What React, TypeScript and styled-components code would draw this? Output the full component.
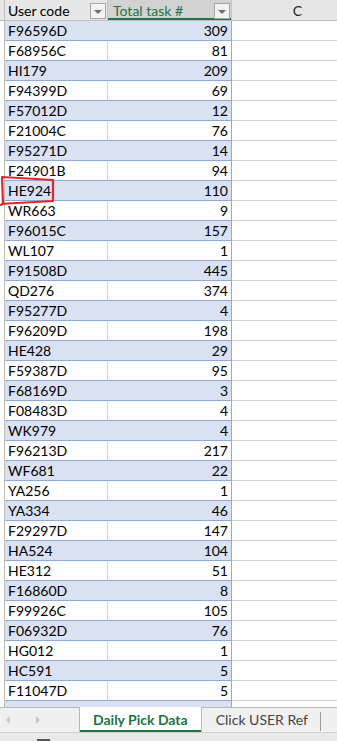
import React from 'react';
import styled, { createGlobalStyle } from 'styled-components';

const rows: [string, number][] = [
  ['F96596D', 309], ['F68956C', 81], ['HI179', 209], ['F94399D', 69],
  ['F57012D', 12], ['F21004C', 76], ['F95271D', 14], ['F24901B', 94],
  ['HE924', 110], ['WR663', 9], ['F96015C', 157], ['WL107', 1],
  ['F91508D', 445], ['QD276', 374], ['F95277D', 4], ['F96209D', 198],
  ['HE428', 29], ['F59387D', 95], ['F68169D', 3], ['F08483D', 4],
  ['WK979', 4], ['F96213D', 217], ['WF681', 22], ['YA256', 1],
  ['YA334', 46], ['F29297D', 147], ['HA524', 104], ['HE312', 51],
  ['F16860D', 8], ['F99926C', 105], ['F06932D', 76], ['HG012', 1],
  ['HC591', 5], ['F11047D', 5],
];

function App() {
  return (
    <Sheet>
      <GlobalStyle />
      <Grid>
        <HeaderRow>
          <Stub $header />
          <HeadCell>
            User code
            <FilterButton><Caret /></FilterButton>
          </HeadCell>
          <HeadCell $selected>
            Total task #
            <FilterButton><Caret /></FilterButton>
          </HeadCell>
          <ColLetter>C</ColLetter>
        </HeaderRow>
        {rows.map(([code, total], i) => (
          <Row key={code}>
            <Stub />
            <CodeCell $band={i % 2 === 0}>{code}</CodeCell>
            <NumCell $band={i % 2 === 0}>{total}</NumCell>
            <EmptyCell />
          </Row>
        ))}
        <Row>
          <Stub />
          <CodeCell $band />
          <NumCell $band />
          <EmptyCell />
        </Row>
        {/* hand-drawn red mark round HE924 */}
        <Annotation width="60" height="34" viewBox="0 0 60 34">
          <path
            d="M2 2 L53 5 L53 26 L8 28.5 L3 29 L2 2 M3 28 L1 30"
            fill="none"
            stroke="#e3262c"
            strokeWidth="2.2"
            strokeLinejoin="round"
            strokeLinecap="round"
          />
        </Annotation>
      </Grid>
      <TabBar>
        <Arrows>
          <Arrow $dir="left" />
          <Arrow $dir="right" />
        </Arrows>
        <Tab $active>Daily Pick Data</Tab>
        <Tab>Click USER Ref</Tab>
      </TabBar>
      <StatusStrip>
        <StatusMark />
      </StatusStrip>
    </Sheet>
  );
}

const GlobalStyle = createGlobalStyle`
  html, body {
    margin: 0;
    padding: 0;
    background: #fff;
    overflow: hidden;
  }
  body {
    font-family: Lato, "Liberation Sans", sans-serif;
    font-size: 14px;
    color: #000;
  }
`;

const Sheet = styled.div`
  width: 337px;
  height: 741px;
  display: flex;
  flex-direction: column;
  overflow: hidden;
`;

const Grid = styled.div`
  position: relative;
  height: 707px;
  overflow: hidden;
  flex-shrink: 0;
`;

const columns = '5px 103px 124px 132px';

const HeaderRow = styled.div`
  display: grid;
  grid-template-columns: ${columns};
  height: 21px;
  background: #e6e6e6;
  border-bottom: 1px solid #bfbfbf;
  box-sizing: border-box;
`;

const Row = styled.div`
  display: grid;
  grid-template-columns: ${columns};
  height: 20px;
`;

const Stub = styled.div<{ $header?: boolean }>`
  background: ${p => (p.$header ? '#e6e6e6' : '#fff')};
  border-right: 1px solid #bdbdbd;
`;

const HeadCell = styled.div<{ $selected?: boolean }>`
  position: relative;
  display: flex;
  align-items: center;
  padding-left: ${p => (p.$selected ? '5px' : '3px')};
  border-right: 1px solid #c4c4c4;
  background: ${p => (p.$selected ? '#d2d2d2' : '#e6e6e6')};
  color: ${p => (p.$selected ? '#217346' : '#000')};
  box-shadow: ${p => (p.$selected ? 'inset 0 -2px 0 #217346' : 'none')};
  white-space: nowrap;
`;

const FilterButton = styled.div`
  position: absolute;
  right: 1px;
  top: 3px;
  width: 14px;
  height: 14px;
  border: 1px solid #a6a6a6;
  background: #f3f3f3;
  display: flex;
  align-items: center;
  justify-content: center;
`;

const Caret = styled.div`
  width: 0;
  height: 0;
  border-left: 4px solid transparent;
  border-right: 4px solid transparent;
  border-top: 4px solid #6f6f6f;
  margin-top: 1px;
`;

const ColLetter = styled.div`
  display: flex;
  align-items: center;
  justify-content: center;
  color: #222;
  border-right: 1px solid #c4c4c4;
`;

const CodeCell = styled.div<{ $band?: boolean }>`
  display: flex;
  align-items: center;
  padding-left: 3px;
  background: ${p => (p.$band ? '#d9e1f2' : '#fff')};
  border-right: 1px solid ${p => (p.$band ? '#d9e1f2' : '#d4d4d4')};
  border-bottom: 1px solid #8eaadb;
  box-sizing: border-box;
  white-space: nowrap;
`;

const NumCell = styled.div<{ $band?: boolean }>`
  display: flex;
  align-items: center;
  justify-content: flex-end;
  padding-right: 3px;
  background: ${p => (p.$band ? '#d9e1f2' : '#fff')};
  border-right: 1px solid #8eaadb;
  border-bottom: 1px solid #8eaadb;
  box-sizing: border-box;
`;

const EmptyCell = styled.div`
  border-right: 1px solid #d4d4d4;
  border-bottom: 1px solid #d4d4d4;
  box-sizing: border-box;
`;

const Annotation = styled.svg`
  position: absolute;
  left: 0;
  top: 175px;
  pointer-events: none;
`;

const TabBar = styled.div`
  height: 24px;
  display: flex;
  align-items: stretch;
  background: #f0f0f0;
  border-top: 1px solid #b8b8b8;
  border-bottom: 1px solid #d0d0d0;
  box-sizing: content-box;
`;

const Arrows = styled.div`
  width: 79px;
  display: flex;
  align-items: center;
  gap: 26px;
  padding-left: 6px;
  box-sizing: border-box;
`;

const Arrow = styled.div<{ $dir: 'left' | 'right' }>`
  width: 0;
  height: 0;
  border-top: 4px solid transparent;
  border-bottom: 4px solid transparent;
  ${p =>
    p.$dir === 'left'
      ? 'border-right: 4px solid #c8c8c8;'
      : 'border-left: 4px solid #c8c8c8;'}
`;

const Tab = styled.div<{ $active?: boolean }>`
  position: relative;
  display: flex;
  align-items: center;
  justify-content: center;
  margin-top: -1px;
  padding: ${p => (p.$active ? '0 13px' : '0 13px 0 14px')};
  font-size: 14px;
  white-space: nowrap;
  background: ${p => (p.$active ? '#fff' : 'transparent')};
  color: ${p => (p.$active ? '#217346' : '#444')};
  font-weight: ${p => (p.$active ? 700 : 400)};
  border-left: ${p => (p.$active ? '1px solid #b8b8b8' : 'none')};
  border-right: ${p => (p.$active ? '1px solid #b8b8b8' : 'none')};
  box-shadow: ${p => (p.$active ? 'inset 0 -2px 0 #217346' : 'none')};

  &::after {
    content: '';
    display: ${p => (p.$active ? 'none' : 'block')};
    position: absolute;
    right: 0;
    top: 5px;
    bottom: 1px;
    width: 1px;
    background: #9a9a9a;
  }
`;

const StatusStrip = styled.div`
  flex: 1;
  background: #e9e9e9;
  position: relative;
`;

const StatusMark = styled.div`
  margin: 6px 0 0 37px;
  width: 13px;
  height: 2px;
  background: #555;
`;

export default App;
